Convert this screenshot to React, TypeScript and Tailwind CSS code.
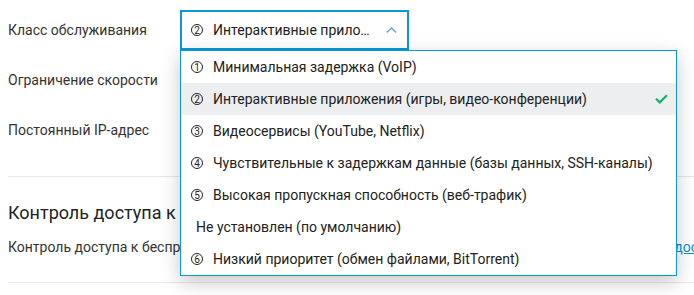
import React from "react";

type Option = { n?: number; label: string };

const options: Option[] = [
  { n: 1, label: "Минимальная задержка (VoIP)" },
  { n: 2, label: "Интерактивные приложения (игры, видео-конференции)" },
  { n: 3, label: "Видеосервисы (YouTube, Netflix)" },
  { n: 4, label: "Чувствительные к задержкам данные (базы данных, SSH-каналы)" },
  { n: 5, label: "Высокая пропускная способность (веб-трафик)" },
  { label: "Не установлен (по умолчанию)" },
  { n: 6, label: "Низкий приоритет (обмен файлами, BitTorrent)" },
];

const selected = 2;

function Circled({ n }: { n: number }) {
  return (
    <span className="inline-flex h-[12px] w-[12px] shrink-0 items-center justify-center rounded-full border border-[#222] pt-px text-[10px] leading-none text-[#222]">
      {n}
    </span>
  );
}

function Chevron() {
  return (
    <svg width="11" height="6" viewBox="0 0 11 6" className="shrink-0">
      <path d="M0.8 5.4 L5.5 0.9 L10.2 5.4" fill="none" stroke="#6f9fd6" strokeWidth="1.4" />
    </svg>
  );
}

function Check() {
  return (
    <svg width="13" height="10" viewBox="0 0 13 10" className="shrink-0">
      <path d="M1 4.8 L4.8 8.4 L12 1.2" fill="none" stroke="#14b06d" strokeWidth="2.2" />
    </svg>
  );
}

function Select() {
  const current = options.find((o) => o.n === selected)!;
  return (
    <div className="relative">
      <div className="flex h-[40px] w-[229px] items-center border-2 border-[#0a97d9] pl-[9px] pr-[10px] text-[#222]">
        <Circled n={current.n!} />
        <span className="ml-[10px] min-w-0 flex-1 truncate">{current.label}</span>
        <span className="ml-[6px]">
          <Chevron />
        </span>
      </div>
      <ul className="absolute left-0 top-full z-10 w-[497px] border border-[#0a97d9] bg-white shadow-[0_6px_18px_rgba(0,0,0,0.22)]">
        {options.map((o) => (
          <li
            key={o.label}
            className={
              "flex h-[32px] items-center pr-[8px] text-[#222] " +
              (o.n === selected ? "bg-[#eceef0] " : "") +
              (o.n ? "pl-[10px]" : "pl-[15px]")
            }
          >
            {o.n && <Circled n={o.n} />}
            <span className={o.n ? "ml-[10px] flex-1" : "flex-1"}>{o.label}</span>
            {o.n === selected && <Check />}
          </li>
        ))}
      </ul>
    </div>
  );
}

export default function App() {
  return (
    <div
      className="relative h-[295px] w-[694px] overflow-hidden bg-white text-[14px] text-[#333]"
      style={{ fontFamily: "Roboto, 'Noto Sans', sans-serif" }}
    >
      <section className="ml-2 border-b border-[#e8e8e8] pb-[21px] pt-[5px]">
        <div className="flex h-[50px] items-center">
          <span className="w-[172px] shrink-0">Класс обслуживания</span>
          <Select />
        </div>
        <div className="flex h-[50px] items-center">
          <span className="w-[172px] shrink-0">Ограничение скорости</span>
        </div>
        <div className="flex h-[50px] items-center">
          <span className="w-[172px] shrink-0">Постоянный IP-адрес</span>
        </div>
      </section>
      <section className="ml-2 border-b border-[#e8e8e8] pb-[25px] pt-[24px]">
        <h2 className="text-[18px] leading-[24px] text-[#222]">Контроль доступа к беспроводной сети</h2>
        <div className="mt-[12px] flex items-center whitespace-nowrap leading-[20px]">
          <span className="w-[584px] shrink-0">Контроль доступа к беспроводной сети отключён</span>
          <a href="#" className="text-[#0a8fd0] underline">
            Управление доступом
          </a>
        </div>
      </section>
    </div>
  );
}
